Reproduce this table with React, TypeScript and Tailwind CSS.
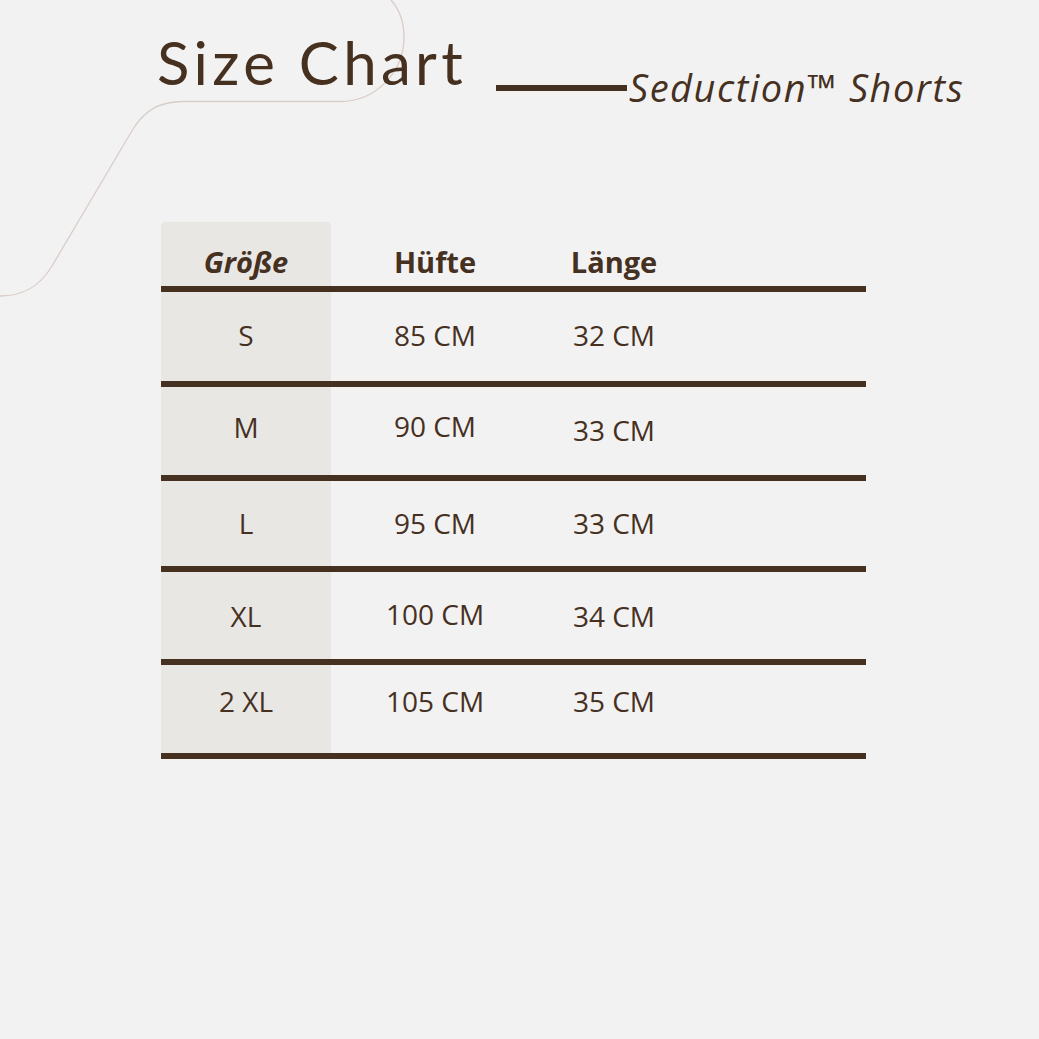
import React from "react";

const brown = "text-[#46301f]";

const rows = [
  { size: "S", hip: "85 CM", len: "32 CM", h: "h-[89px]", dSize: "pb-[4px]", dHip: "pb-[4px]", dLen: "pb-[4px]" },
  { size: "M", hip: "90 CM", len: "33 CM", h: "h-[88px]", dSize: "pb-[8px]", dHip: "pb-[10px]", dLen: "pb-[2px]" },
  { size: "L", hip: "95 CM", len: "33 CM", h: "h-[85px]", dSize: "pb-[2px]", dHip: "pb-[2px]", dLen: "pb-[2px]" },
  { size: "XL", hip: "100 CM", len: "34 CM", h: "h-[87px]", dSize: "pt-[0px]", dHip: "pb-[3px]", dLen: "pt-[0px]" },
  { size: "2 XL", hip: "105 CM", len: "35 CM", h: "h-[88px]", dSize: "pb-[17px]", dHip: "pb-[17px]", dLen: "pb-[17px]" },
];

function Rule() {
  return <div className="h-[6px] w-full bg-[#46301f]" />;
}

export default function App() {
  return (
    <div className="relative w-[1039px] h-[1039px] overflow-hidden bg-[#f2f2f2]">
      {/* decorative curve behind the title */}
      <svg className="absolute left-0 top-0" width="420" height="310" viewBox="0 0 420 310" fill="none">
        <path
          d="M0 296 C24 296 40 286 52 266 L133 129 C145 110 160 101.5 183 101.5 L340 101.5 C376 101.5 404 72 404 37 C404 22 399 9 391 0"
          stroke="#d9cdc7"
          strokeWidth="1.3"
        />
      </svg>

      <header className={`relative flex items-start pl-[157px] ${brown}`}>
        <h1 className="mt-[32px] text-[60px] leading-[60px] font-normal tracking-[4.3px] font-['Lato',sans-serif]">
          Size Chart
        </h1>
        <div className="ml-[29px] mt-[85px] h-[6px] w-[131px] bg-[#46301f]" />
        <p className="ml-[2px] mt-[67px] text-[38px] leading-[40px] italic tracking-[1.5px] font-['Open_Sans',sans-serif]">
          Seduction™ Shorts
        </p>
      </header>

      <div className={`relative ml-[161px] mt-[115px] w-[705px] font-['Open_Sans',sans-serif] ${brown}`}>
        <div className="grid grid-cols-[170px_208px_150px_1fr] h-[64px]">
          <div className="flex items-end justify-center pb-[10px] rounded-t-[4px] bg-[#e8e7e4]">
            <span className="text-[29px] leading-[29px] font-bold italic">Größe</span>
          </div>
          <div className="flex items-end justify-center pb-[10px]">
            <span className="text-[29px] leading-[29px] font-bold">Hüfte</span>
          </div>
          <div className="flex items-end justify-center pb-[10px]">
            <span className="text-[29px] leading-[29px] font-bold">Länge</span>
          </div>
          <div />
        </div>
        <Rule />
        {rows.map((r) => (
          <div key={r.size}>
            <div className={`grid grid-cols-[170px_208px_150px_1fr] ${r.h} text-[28px] leading-[28px]`}>
              <div className={`flex items-center justify-center bg-[#e8e7e4] ${r.dSize}`}>{r.size}</div>
              <div className={`flex items-center justify-center ${r.dHip}`}>{r.hip}</div>
              <div className={`flex items-center justify-center ${r.dLen}`}>{r.len}</div>
              <div />
            </div>
            <Rule />
          </div>
        ))}
      </div>
    </div>
  );
}
